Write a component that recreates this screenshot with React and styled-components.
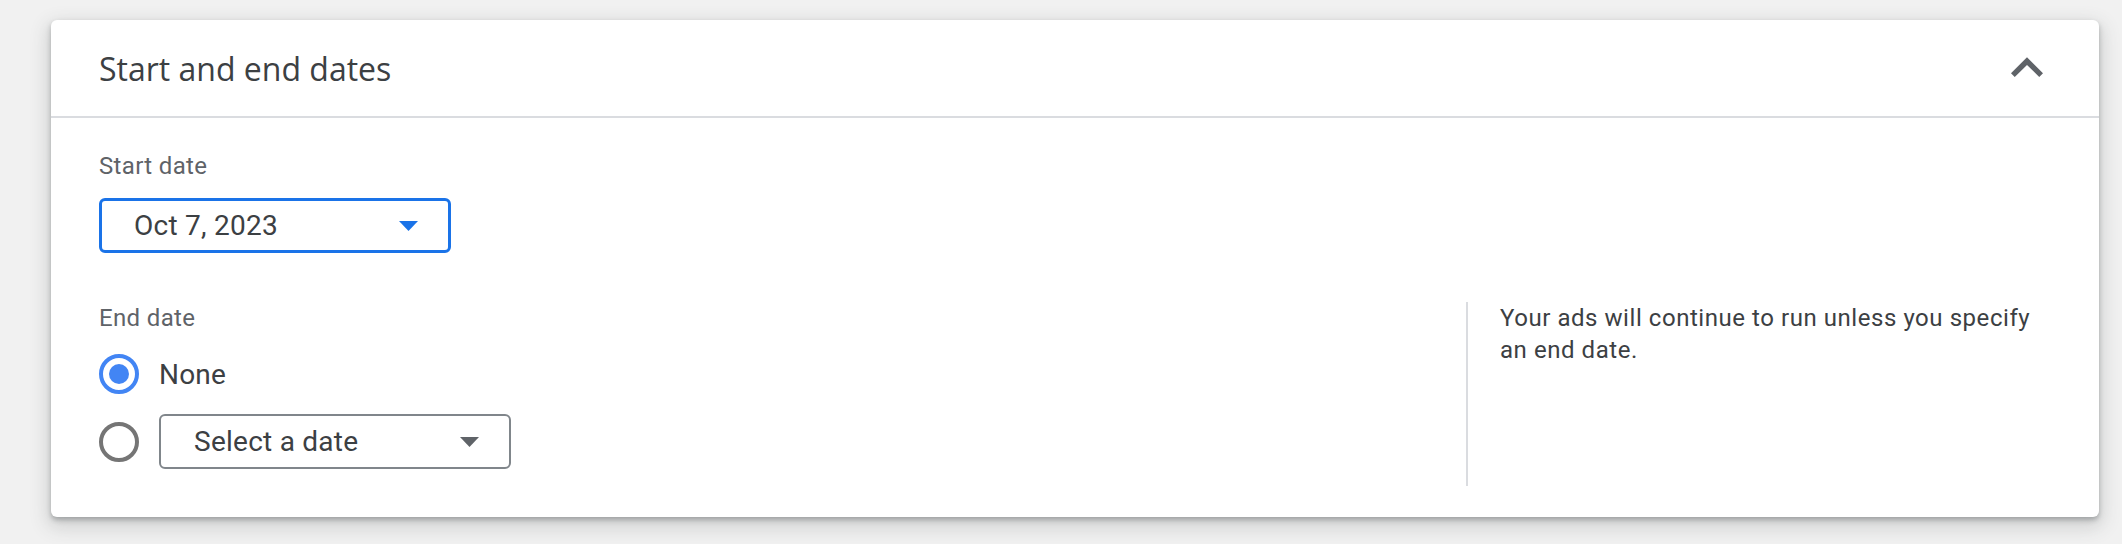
import React, { useState } from "react";
import styled, { createGlobalStyle } from "styled-components";

const GlobalStyle = createGlobalStyle`
  html, body {
    margin: 0;
    padding: 0;
    background: #f1f1f1;
  }
  body {
    font-family: Roboto, "Liberation Sans", sans-serif;
    color: #3c4043;
  }
`;

const ChevronUp = () => (
  <svg width="64" height="64" viewBox="0 0 24 24" fill="#5f6368">
    <path d="M12 8l-6 6 1.41 1.41L12 10.83l4.59 4.58L18 14z" />
  </svg>
);

const Caret = ({ color }) => (
  <svg width="19" height="10" viewBox="0 0 19 10">
    <polygon points="0,0 19,0 9.5,10" fill={color} />
  </svg>
);

const App = () => {
  const [endMode, setEndMode] = useState("none");

  return (
    <>
      <GlobalStyle />
      <Page>
        <Card>
          <CardHeader>
            <Title>Start and end dates</Title>
            <CollapseButton aria-label="Collapse">
              <ChevronUp />
            </CollapseButton>
          </CardHeader>

          <CardBody>
            <FieldLabel>Start date</FieldLabel>
            <DateSelect active>
              <span>Oct 7, 2023</span>
              <Caret color="#1a73e8" />
            </DateSelect>

            <EndRow>
              <EndColumn>
                <FieldLabel>End date</FieldLabel>
                <RadioList>
                  <RadioRow onClick={() => setEndMode("none")}>
                    <Radio checked={endMode === "none"} />
                    <RadioText>None</RadioText>
                  </RadioRow>
                  <RadioRow onClick={() => setEndMode("date")}>
                    <Radio checked={endMode === "date"} />
                    <DateSelect>
                      <span>Select a date</span>
                      <Caret color="#5f6368" />
                    </DateSelect>
                  </RadioRow>
                </RadioList>
              </EndColumn>
              <HelpText>
                Your ads will continue to run unless you specify an end date.
              </HelpText>
            </EndRow>
          </CardBody>
        </Card>
      </Page>
    </>
  );
};

export default App;

const Page = styled.div`
  padding: 20px 23px 27px 51px;
`;

const Card = styled.section`
  width: 2048px;
  background: #fff;
  border-radius: 6px;
  box-shadow: 0 3px 5px rgba(60, 64, 67, 0.34),
    0 7px 18px 4px rgba(60, 64, 67, 0.17);
`;

const CardHeader = styled.header`
  display: flex;
  align-items: center;
  justify-content: space-between;
  height: 98px;
  padding: 0 40px 0 48px;
  border-bottom: 2px solid #dadce0;
  box-sizing: border-box;
`;

const Title = styled.h2`
  margin: 0;
  font-family: "Open Sans", Roboto, sans-serif;
  font-size: 32px;
  font-weight: 400;
  color: #3c4043;
`;

const CollapseButton = styled.button`
  display: flex;
  padding: 0;
  border: none;
  background: none;
  cursor: pointer;
`;

const CardBody = styled.div`
  padding: 32px 60px 31px 48px;
`;

const FieldLabel = styled.div`
  font-size: 24px;
  line-height: 32px;
  color: #5f6368;
  letter-spacing: 0.35px;
`;

const DateSelect = styled.div`
  display: flex;
  align-items: center;
  justify-content: space-between;
  box-sizing: border-box;
  width: 352px;
  height: 55px;
  margin-top: ${(p) => (p.active ? "16px" : "0")};
  padding: 0 ${(p) => (p.active ? "30px 0 32px" : "30px 0 33px")};
  border: ${(p) => (p.active ? "3px solid #1a73e8" : "2px solid #80868b")};
  border-radius: 6px;
  font-size: 28px;
  letter-spacing: 0.25px;
  color: #3c4043;
  cursor: pointer;
`;

const EndRow = styled.div`
  display: flex;
  margin-top: 49px;
`;

const EndColumn = styled.div`
  flex: 1;
  padding-bottom: 17px;
`;

const RadioList = styled.div`
  display: flex;
  flex-direction: column;
  gap: 20px;
  margin-top: 20px;
`;

const RadioRow = styled.div`
  display: flex;
  align-items: center;
  gap: 20px;
  cursor: pointer;
`;

const Radio = styled.span`
  flex: none;
  box-sizing: border-box;
  width: 40px;
  height: 40px;
  border-radius: 50%;
  border: 4px solid ${(p) => (p.checked ? "#4285f4" : "#757575")};
  display: flex;
  align-items: center;
  justify-content: center;

  &::after {
    content: "";
    width: 20px;
    height: 20px;
    border-radius: 50%;
    background: ${(p) => (p.checked ? "#4285f4" : "transparent")};
  }
`;

const RadioText = styled.span`
  font-size: 28px;
  letter-spacing: 0.2px;
  color: #3c4043;
`;

const HelpText = styled.p`
  width: 573px;
  box-sizing: border-box;
  margin: 0;
  padding-left: 32px;
  border-left: 2px solid #dadce0;
  font-size: 24px;
  line-height: 32px;
  letter-spacing: 0.55px;
  color: #3c4043;
`;
